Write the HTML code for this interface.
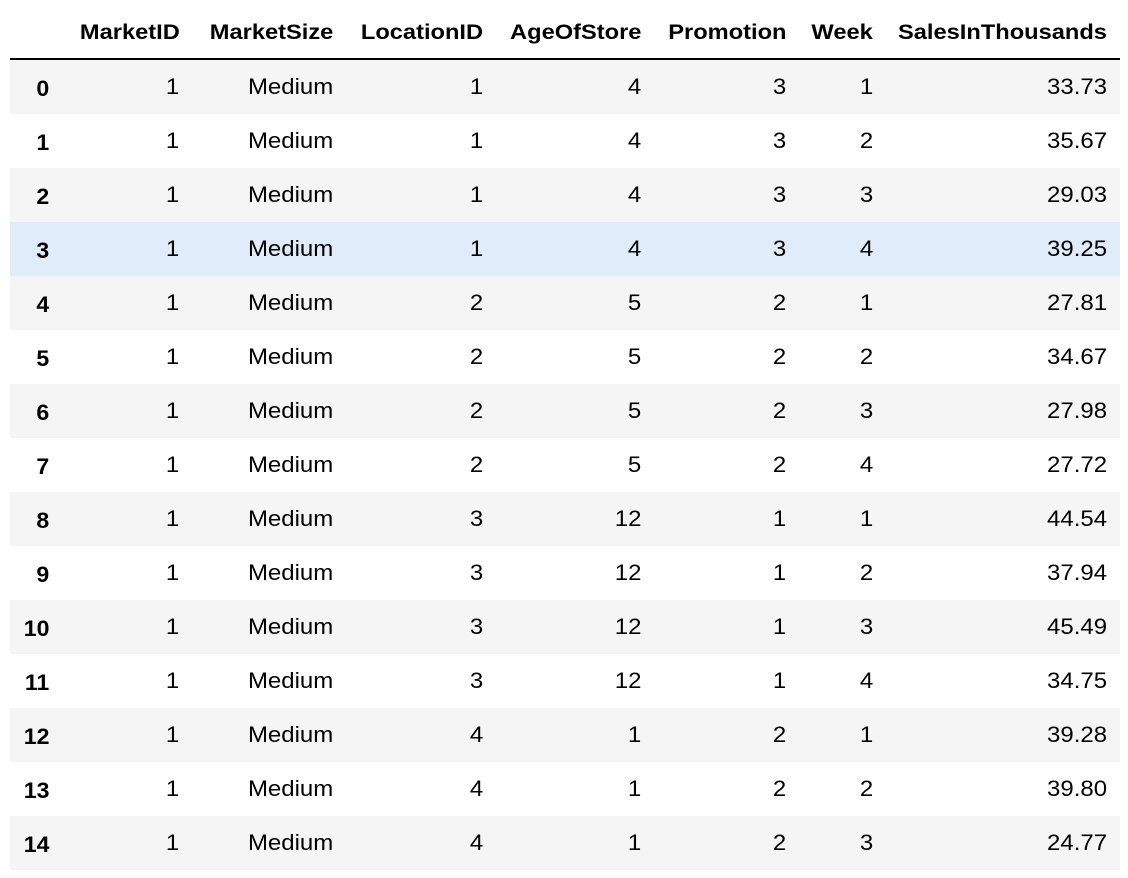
<!DOCTYPE html>
<html><head><meta charset="utf-8"><style>
body{margin:0;width:1128px;height:878px;background:#fff;font-family:"Liberation Sans",Arial,sans-serif;color:#000;position:relative;overflow:hidden}
.r{position:absolute;left:10px;width:1110px;height:54px}
.g{background:#f5f5f5}.h{background:#e1ecfa}
.c{position:absolute;font-size:22px;line-height:54px;text-align:right;white-space:nowrap;transform:scaleX(1.09);transform-origin:right center}
.hd{font-weight:bold;line-height:24px;top:20px;font-size:21.5px;transform:scaleX(1.1)}
.i{font-weight:bold;top:2px;transform:scaleX(1.05)}
.line{position:absolute;left:10px;width:1110px;top:58px;height:2px;background:#000}
</style></head><body>
<div class="line"></div>
<div class="c hd" style="right:948px">MarketID</div>
<div class="c hd" style="right:795px">MarketSize</div>
<div class="c hd" style="right:645px">LocationID</div>
<div class="c hd" style="right:487px">AgeOfStore</div>
<div class="c hd" style="right:342px">Promotion</div>
<div class="c hd" style="right:255px">Week</div>
<div class="c hd" style="right:21px">SalesInThousands</div>
<div id="t"></div>
<script>
var d=[[1,1,4,3,1,"33.73"],[1,1,4,3,2,"35.67"],[1,1,4,3,3,"29.03"],[1,1,4,3,4,"39.25"],[1,2,5,2,1,"27.81"],[1,2,5,2,2,"34.67"],[1,2,5,2,3,"27.98"],[1,2,5,2,4,"27.72"],[1,3,12,1,1,"44.54"],[1,3,12,1,2,"37.94"],[1,3,12,1,3,"45.49"],[1,3,12,1,4,"34.75"],[1,4,1,2,1,"39.28"],[1,4,1,2,2,"39.80"],[1,4,1,2,3,"24.77"]];
var h="";
d.forEach(function(r,i){
var cls=i==3?"r h":(i%2==0?"r g":"r");
var y=60+i*54;
h+='<div class="'+cls+'" style="top:'+y+'px">'+
'<div class="c i" style="right:1071px">'+i+'</div>'+
'<div class="c" style="right:941px">'+r[0]+'</div>'+
'<div class="c" style="right:787px">Medium</div>'+
'<div class="c" style="right:637px">'+r[1]+'</div>'+
'<div class="c" style="right:479px">'+r[2]+'</div>'+
'<div class="c" style="right:334px">'+r[3]+'</div>'+
'<div class="c" style="right:247px">'+r[4]+'</div>'+
'<div class="c" style="right:13px">'+r[5]+'</div></div>';
});
document.getElementById("t").innerHTML=h;
</script>
</body></html>
